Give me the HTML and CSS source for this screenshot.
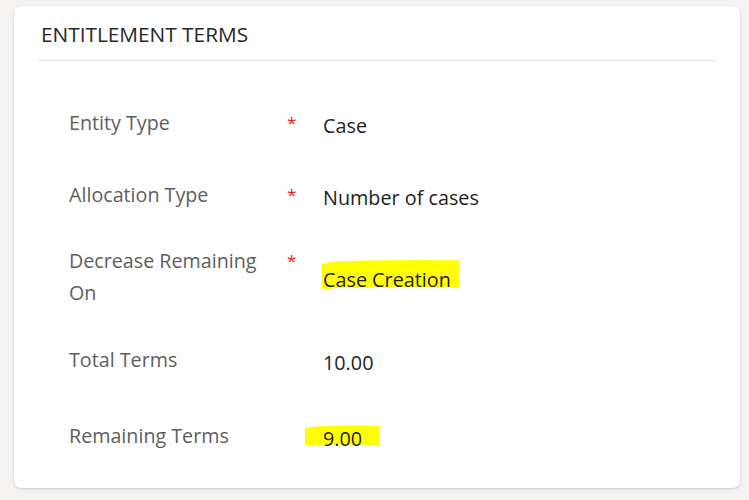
FILE: index.html
```html
<!DOCTYPE html>
<html lang="en">
<head>
<meta charset="utf-8">
<title>Entitlement Terms</title>
<link rel="stylesheet" href="styles.css">
</head>
<body>
<section class="card">
  <header class="card-header">
    <h2 class="card-title">ENTITLEMENT TERMS</h2>
  </header>
  <div class="fields">
    <div class="row row-first">
      <div class="label">Entity Type</div>
      <div class="req">*</div>
      <div class="value">Case</div>
    </div>
    <div class="row">
      <div class="label">Allocation Type</div>
      <div class="req">*</div>
      <div class="value">Number of cases</div>
    </div>
    <div class="row">
      <div class="label">Decrease Remaining On</div>
      <div class="req req-top">*</div>
      <div class="value"><span class="mark mark-wide">Case Creation</span></div>
    </div>
    <div class="row row-fourth">
      <div class="label">Total Terms</div>
      <div class="req"></div>
      <div class="value">10.00</div>
    </div>
    <div class="row row-last">
      <div class="label">Remaining Terms</div>
      <div class="req"></div>
      <div class="value"><span class="mark mark-num">9.00</span></div>
    </div>
  </div>
</section>
</body>
</html>
```
FILE: styles.css
```css
html, body {
  margin: 0;
  padding: 0;
}
body {
  background: #f4f3f2;
  font-family: "Open Sans", "Noto Sans", sans-serif;
  padding: 6px 9px 12px 14px;
  height: 500px;
  box-sizing: border-box;
}
.card {
  background: #ffffff;
  border-radius: 7px;
  box-shadow: 0 1px 3px rgba(0, 0, 0, 0.16), 0 0 1px rgba(0, 0, 0, 0.08);
  height: 482px;
  box-sizing: border-box;
  padding: 14px 24px 0 24px;
}
.card-header {
  border-bottom: 1px solid #e6e4e2;
  padding: 0 0 12px 3px;
}
.card-title {
  margin: 0;
  font-size: 20.8px;
  font-weight: 400;
  line-height: 28px;
  color: #292827;
  letter-spacing: 0;
}
.fields {
  display: flex;
  flex-direction: column;
  gap: 31px;
  padding: 43px 0 0 31px;
}
.row {
  display: flex;
  align-items: center;
}
.row-first {
  margin-bottom: 3px;
}
.row-fourth {
  margin-top: 1px;
}
.row-last {
  margin-top: 7px;
}
.label {
  width: 190px;
  flex: none;
  font-size: 19.7px;
  line-height: 32px;
  color: #5f5e5d;
}
.req {
  width: 36px;
  flex: none;
  align-self: flex-start;
  color: #f01818;
  font-size: 17px;
  line-height: 20px;
  padding-top: 9px;
  margin-left: 28px;
}
.req-top {
  padding-top: 6px;
}
.value {
  margin-top: 6px;
  font-size: 19.8px;
  line-height: 32px;
  color: #1f1e1d;
}
.mark {
  position: relative;
  isolation: isolate;
}
.mark::before {
  content: "";
  position: absolute;
  z-index: -1;
  background: #ffff00;
}
.mark-wide::before {
  left: -1px;
  right: -8px;
  top: -6px;
  bottom: 4px;
  clip-path: polygon(0 14%, 8% 6%, 30% 2%, 70% 0, 100% 1%, 100% 95%, 60% 94%, 15% 96%, 3% 100%, 0 100%);
}
.mark-num::before {
  left: -18px;
  right: -17px;
  top: 1px;
  bottom: 7px;
  clip-path: polygon(0 8%, 25% 0, 100% 0, 100% 100%, 35% 97%, 25% 100%, 0 100%);
}
```
